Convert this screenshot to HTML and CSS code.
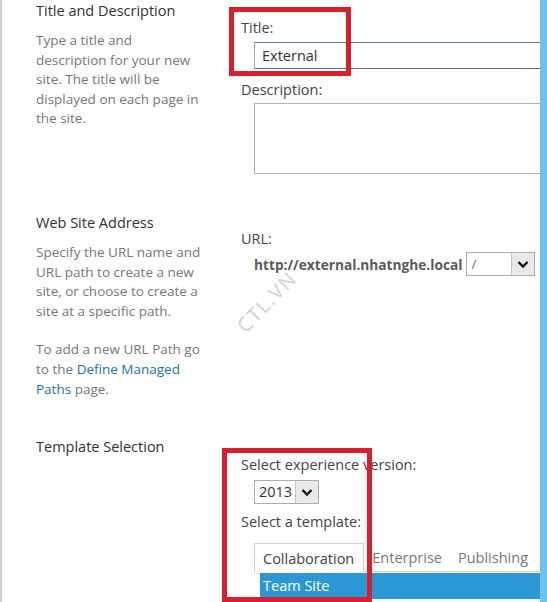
FILE: index.html
```html
<!DOCTYPE html>
<html>
<head>
<meta charset="utf-8">
<link rel="stylesheet" href="styles.css">
</head>
<body>
<div class="page">
  <div class="content">
    <section class="row row-title">
      <div class="info">
        <h2 class="info-title">Title and Description</h2>
        <p class="info-text">Type a title and<br>description for your new<br>site. The title will be<br>displayed on each page in<br>the site.</p>
      </div>
      <div class="fields fields-title">
        <div class="label">Title:</div>
        <div class="input input-title">External</div>
        <div class="label label-gap">Description:</div>
        <div class="textarea"></div>
      </div>
    </section>

    <section class="row row-url">
      <div class="info">
        <h2 class="info-title">Web Site Address</h2>
        <p class="info-text">Specify the URL name and<br>URL path to create a new<br>site, or choose to create a<br>site at a specific path.</p>
        <p class="info-text info-gap">To add a new URL Path go<br>to the <span class="link">Define Managed</span><br><span class="link">Paths</span> page.</p>
      </div>
      <div class="fields">
        <div class="label">URL:</div>
        <div class="url-line">
          <span class="url-host">http://external.nhatnghe.local</span>
          <div class="select select-path">
            <span class="select-value">/</span>
            <span class="select-btn"><svg width="12" height="9" viewBox="0 0 12 9"><polyline points="1.5,2 6,6.5 10.5,2" fill="none" stroke="#111" stroke-width="2.4"/></svg></span>
          </div>
        </div>
      </div>
    </section>

    <section class="row row-template">
      <div class="info">
        <h2 class="info-title">Template Selection</h2>
      </div>
      <div class="fields fields-template">
        <div class="label">Select experience version:</div>
        <div class="select select-version">
          <span class="select-value">2013</span>
          <span class="select-btn"><svg width="12" height="9" viewBox="0 0 12 9"><polyline points="1.5,2 6,6.5 10.5,2" fill="none" stroke="#111" stroke-width="2.4"/></svg></span>
        </div>
        <div class="label label-gap2">Select a template:</div>
        <div class="tabs">
          <div class="tab tab-active">Collaboration</div>
          <div class="tab">Enterprise</div>
          <div class="tab">Publishing</div>
          <div class="tab-fill"></div>
        </div>
        <div class="list">
          <div class="list-item list-item-selected">Team Site</div>
        </div>
      </div>
    </section>
  </div>
  <div class="scrollbar"></div>

  <div class="watermark">CTL.VN</div>
  <div class="highlight highlight-title"></div>
  <div class="highlight highlight-template"></div>
</div>
</body>
</html>
```

FILE: styles.css
```css
html, body {
  margin: 0;
  padding: 0;
  background: #ffffff;
}

body {
  font-family: "Open Sans", "Noto Sans", sans-serif;
  color: #444;
  overflow: hidden;
}

.page {
  position: relative;
  display: flex;
  width: 547px;
  height: 602px;
  overflow: hidden;
}

.content {
  flex: 1;
  min-width: 0;
  border-left: 2px solid #cfcfcf;
  overflow: hidden;
}

.scrollbar {
  width: 7px;
  background: #6fc3e8;
}

.row {
  display: grid;
  grid-template-columns: 239px 1fr;
}

.row-title { height: 212px; }
.row-url { height: 224px; }
.row-template { height: 200px; }

.info {
  padding-left: 34px;
}

.info-title {
  margin: 0;
  font-size: 14.5px;
  font-weight: 400;
  line-height: 21px;
  color: #333;
}

.info-text {
  margin: 10px 0 0;
  font-size: 13.5px;
  line-height: 19.6px;
  color: #777;
  white-space: nowrap;
}

.info-gap {
  margin-top: 19px;
}

.link {
  color: #1a74a8;
}

.fields {
  padding-top: 16px;
  min-width: 0;
}

.fields-title {
  padding-top: 17px;
}

.fields-template {
  padding-top: 18px;
}

.label {
  font-size: 14.5px;
  line-height: 21px;
  color: #444;
  white-space: nowrap;
}

.label-gap {
  margin-top: 10px;
}

.input {
  margin: 4px 0 0 13px;
  height: 25px;
  border: 1px solid #9aa9b2;
  border-top-color: #5f7c8c;
  border-bottom-color: #56707e;
  border-right: none;
  padding-left: 7px;
  font-size: 14.5px;
  line-height: 26px;
  color: #333;
}

.textarea {
  margin: 3px 0 0 13px;
  height: 69px;
  border: 1px solid #b4b4b4;
  border-right: none;
}

.url-line {
  display: flex;
  align-items: center;
  margin: 3px 0 0 13px;
  gap: 4px;
}

.url-host {
  font-family: "Open Sans", "Noto Sans", sans-serif;
  font-weight: 700;
  font-size: 13.7px;
  color: #5a5a5a;
  white-space: nowrap;
}

.select {
  display: flex;
  height: 22px;
  border: 1px solid #adadad;
  background: #fff;
}

.select-path {
  width: 67px;
}

.select-version {
  width: 63px;
  margin: 5px 0 0 13px;
}

.select-value {
  flex: 1;
  padding-left: 4px;
  font-size: 14.5px;
  line-height: 22px;
  color: #333;
}

.select-path .select-value {
  font-size: 13px;
  color: #666;
}

.select-btn {
  width: 22px;
  display: flex;
  align-items: center;
  justify-content: center;
  background: #e9e9e9;
  border-left: 1px solid #c4c4c4;
}

.label-gap2 {
  margin-top: 7px;
}

.tabs {
  display: flex;
  margin: 11px 0 0 13px;
  height: 29px;
}

.tab {
  padding: 0 8px;
  font-size: 14.5px;
  line-height: 29px;
  color: #777;
  border-bottom: 1px solid #d6d6d6;
  white-space: nowrap;
}

.tab-active {
  color: #444;
  padding-right: 9px;
  border: 1px solid #cfcfcf;
  border-bottom: none;
}

.tab-fill {
  flex: 1;
  border-bottom: 1px solid #d6d6d6;
}

.list {
  margin-left: 19px;
  padding-top: 1px;
}

.list-item {
  height: 26px;
  padding-left: 3px;
  font-size: 14.5px;
  line-height: 26px;
}

.list-item-selected {
  background: #2b98d6;
  color: #fff;
}

.watermark {
  position: absolute;
  left: 248px;
  top: 316px;
  font-family: "Open Sans", "Noto Sans", sans-serif;
  font-size: 20px;
  line-height: 20px;
  letter-spacing: 1.5px;
  color: #d2d2d2;
  transform: rotate(-46deg);
  transform-origin: left bottom;
  white-space: nowrap;
}

.highlight {
  position: absolute;
  border: 5px solid #d8202c;
  box-sizing: border-box;
}

.highlight-title {
  left: 229px;
  top: 7px;
  width: 122px;
  height: 69px;
}

.highlight-template {
  left: 222px;
  top: 448px;
  width: 150px;
  height: 154px;
}
```
